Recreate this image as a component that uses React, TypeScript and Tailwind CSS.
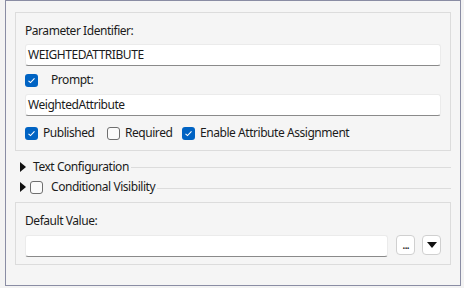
import React from "react";

const font = { fontFamily: '"Noto Sans", "Open Sans", sans-serif' };

function CheckBox({ checked }: { checked: boolean }) {
  if (checked) {
    return (
      <span className="flex h-[13px] w-[13px] shrink-0 items-center justify-center rounded-[3px] bg-[#0063c3]">
        <svg width="9" height="9" viewBox="0 0 9 9">
          <polyline points="1.5,4.8 3.5,6.6 7.5,2.4" fill="none" stroke="#ffffff" strokeWidth="1.1" />
        </svg>
      </span>
    );
  }
  return <span className="block h-[13px] w-[13px] shrink-0 rounded-[3px] border border-[#6f6f6f] bg-[#fbfbfb]" />;
}

function TextBox({ value, className }: { value: string; className?: string }) {
  return (
    <div
      className={
        "flex h-[22px] items-center rounded-[3px] border border-[#ebebeb] border-b-[#8a8a8a] bg-white px-[2px] text-[12px] text-[#1b1b1b] " +
        (className ?? "")
      }
    >
      {value}
    </div>
  );
}

function Arrow() {
  return (
    <svg width="6" height="10" viewBox="0 0 6 10" className="shrink-0">
      <polygon points="0,0 6,5 0,10" fill="#111111" />
    </svg>
  );
}

function CheckLabel({ checked, label }: { checked: boolean; label: string }) {
  return (
    <div className="flex items-center gap-[5px]">
      <CheckBox checked={checked} />
      <span>{label}</span>
    </div>
  );
}

export default function App() {
  return (
    <div
      className="h-[288px] w-[464px] bg-[#f3f3f3] pl-[5px] text-[12px] tracking-[-0.45px] text-[#1b1b1b]"
      style={font}
    >
      <div className="h-[286px] w-[456px] border border-[#8a8da4] bg-[#f5f5f5] px-[9px] pt-[11px]">
        {/* main group */}
        <div className="h-[139px] border border-[#dcdcdc] px-[9px] pt-[9px]">
          <div className="flex h-[18px] items-center">Parameter Identifier:</div>
          <TextBox value="WEIGHTEDATTRIBUTE" className="mt-[4px]" />
          <div className="mt-[4px] flex h-[20px] items-center gap-[13px]">
            <CheckBox checked />
            <span>Prompt:</span>
          </div>
          <TextBox value="WeightedAttribute" className="mt-[4px]" />
          <div className="mt-[7px] flex h-[20px] items-center">
            <div className="w-[82px]">
              <CheckLabel checked label="Published" />
            </div>
            <div className="w-[75px]">
              <CheckLabel checked={false} label="Required" />
            </div>
            <CheckLabel checked label="Enable Attribute Assignment" />
          </div>
        </div>

        {/* collapsed sections */}
        <div className="mt-[6px] flex h-[20px] items-center pl-[5px]">
          <Arrow />
          <span className="ml-[7px]">Text Configuration</span>
          <div className="ml-[2px] h-px flex-1 bg-[#dcdcdc]" />
        </div>
        <div className="flex h-[20px] items-center pl-[5px]">
          <Arrow />
          <span className="ml-[4px]">
            <CheckBox checked={false} />
          </span>
          <span className="ml-[8px]">Conditional Visibility</span>
          <div className="ml-[2px] mt-[2px] h-px flex-1 bg-[#dcdcdc]" />
        </div>

        {/* default value */}
        <div className="mt-[5px] h-[63px] border border-[#dcdcdc] px-[9px] pt-[9px]">
          <div className="flex h-[18px] items-center">Default Value:</div>
          <div className="mt-[5px] flex items-start">
            <TextBox value="" className="flex-1" />
            <button className="ml-[8px] flex h-[20px] w-[19px] items-end justify-center rounded-[4px] border border-[#d0d0d0] bg-white pb-[3px] text-[12px] leading-none">
              <span className="tracking-[-1px] text-[#1b1b1b]">...</span>
            </button>
            <button className="ml-[7px] flex h-[20px] w-[19px] items-center justify-center rounded-[4px] border border-[#d0d0d0] bg-white">
              <svg width="10" height="6" viewBox="0 0 10 6">
                <polygon points="0,0 10,0 5,6" fill="#111111" />
              </svg>
            </button>
          </div>
        </div>
      </div>
    </div>
  );
}
